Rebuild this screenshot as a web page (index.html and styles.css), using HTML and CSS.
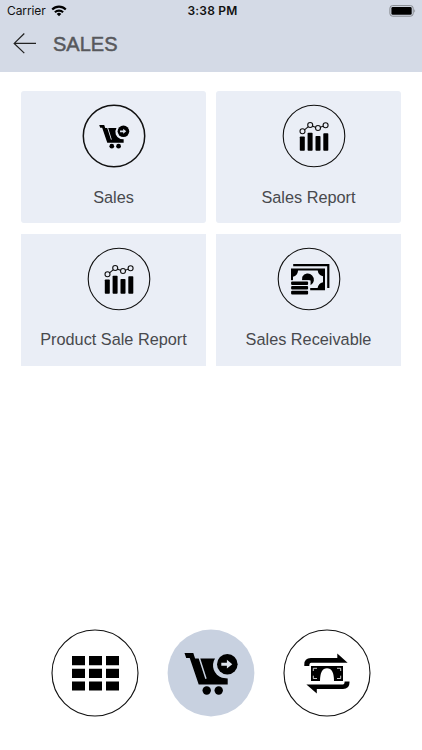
FILE: index.html
```html
<!DOCTYPE html>
<html lang="en">
<head>
<meta charset="utf-8">
<title>Sales</title>
<link rel="stylesheet" href="styles.css">
</head>
<body>
<svg class="defs" aria-hidden="true">
  <defs>
    <g id="cart">
      <path d="M24.5 30h8.8l1.8 5.5h3.6l6.6 20.6 1.4-.5-6.4-20.1h14.7a13 13 0 0 0 7 19.3l5.7.7v6H38.7L29.7 35h-3.5z"/>
      <circle cx="46.7" cy="67.5" r="4.2"/><circle cx="58.7" cy="67.5" r="4.2"/>
      <circle cx="67.3" cy="41.2" r="10.3"/>
      <path class="knock" d="M61.3 39.7h5.6v-2.9l5.4 4.4-5.4 4.4v-2.9h-5.6z"/>
    </g>
    <g id="chart">
      <g class="line"><path d="M20.7 27.4 28.2 21.2 35.8 24.2 43.5 21.2"/><g class="hollow"><circle cx="20.5" cy="27.2" r="2.5"/><circle cx="28.2" cy="21" r="2.5"/><circle cx="36" cy="24" r="2.5"/><circle cx="43.6" cy="21.2" r="2.5"/></g></g>
      <rect x="17.8" y="32.5" width="5" height="14.2" rx=".8"/><rect x="25.6" y="28.8" width="5" height="17.9" rx=".8"/><rect x="33.5" y="32" width="5" height="14.7" rx=".8"/><rect x="41.3" y="29.2" width="5" height="17.5" rx=".8"/>
    </g>
  </defs>
</svg>
<header class="header">
  <div class="status">
    <div class="carrier">Carrier
      <svg class="wifi" width="16" height="12" viewBox="0 0 16 12"><g fill="none" stroke="#000" stroke-width="2.1"><path d="M1.2 4.4a9.6 9.6 0 0 1 13.6 0"/><path d="M3.9 7.3a5.8 5.8 0 0 1 8.2 0"/></g><path d="M5.7 8.9a3.3 3.3 0 0 1 4.6 0L8 11.2z"/></svg>
    </div>
    <div class="time">3:38 PM</div>
    <svg class="battery" width="28" height="12" viewBox="0 0 28 12"><rect x=".9" y=".6" width="23.3" height="10.6" rx="2.7" fill="none" stroke="#85898f"/><rect x="2.4" y="2.1" width="20.3" height="7.6" rx="1.3"/><path d="M25.3 4q1.8 1.9 0 3.8z" fill="#85898f"/></svg>
  </div>
  <div class="titlebar">
    <svg class="back" width="24" height="22" viewBox="0 0 24 22"><path d="M23 10.4H1M11.3 .5 1.2 10.4l10.1 9.7" fill="none" stroke="#222" stroke-width="1.25"/></svg>
    <h1>SALES</h1>
  </div>
</header>
<main class="grid">
  <section class="card rounded">
    <svg class="icon" width="64" height="64" viewBox="0 0 64 64"><circle class="ring bold" cx="32" cy="32" r="30.7"/><use href="#cart" transform="translate(3.4 4) scale(.565)"/></svg>
    <span>Sales</span>
  </section>
  <section class="card rounded">
    <svg class="icon shifted" width="64" height="64" viewBox="0 0 64 64"><circle class="ring" cx="32" cy="32" r="30.8"/><use href="#chart"/></svg>
    <span>Sales Report</span>
  </section>
  <section class="card">
    <svg class="icon shifted" width="64" height="64" viewBox="0 0 64 64"><circle class="ring" cx="32" cy="32" r="30.8"/><use href="#chart"/></svg>
    <span>Product Sale Report</span>
  </section>
  <section class="card">
    <svg class="icon" width="64" height="64" viewBox="0 0 64 64"><circle class="ring" cx="32" cy="32" r="30.8"/>
      <path d="M16.2 18.1H51.3V41" fill="none" stroke="#000" stroke-width="2.2"/>
      <path fill-rule="evenodd" d="M14 21.4H48V43.2H33.2V33.8H14zM21.1 23.5Q20.5 28.7 16 29.8V33.8H33.2V41H40.6Q41.3 36.5 46 35.2V29.2Q41.3 28 40.7 23.5z"/>
      <path d="M25.3 29.7A6.2 6.2 0 1 1 33.6 38.2V33.4H25z"/>
      <path class="page" d="M12.5 33.2H32.7V50H12.5z"/>
      <g><rect x="14.1" y="34.5" width="17" height="3.5" rx="1"/><rect x="14.1" y="39.1" width="17" height="3.5" rx="1"/><rect x="14.1" y="43.7" width="17" height="3.7" rx="1"/></g>
    </svg>
    <span>Sales Receivable</span>
  </section>
</main>
<nav class="tabs">
  <svg width="88" height="88" viewBox="6 6 88 88"><circle class="ring" cx="50" cy="50" r="43"/><path d="M27 33h13v9.2H27zM44 33h13v9.2H44zM61 33h13v9.2H61zM27 45.8h13V55H27zM44 45.8h13V55H44zM61 45.8h13V55H61zM27 58.4h13v9.2H27zM44 58.4h13v9.2H44zM61 58.4h13v9.2H61z"/></svg>
  <svg class="active" width="88" height="88" viewBox="7 6 88 88"><circle cx="51" cy="50" r="43.4" fill="#c8d1e0"/><use href="#cart"/></svg>
  <svg width="88" height="88" viewBox="6 6 88 88"><circle class="ring" cx="50" cy="50" r="43"/>
    <path d="M27.3 43V41.5Q27.3 35 33.8 35H60.3V30.5L70.6 39.8H34.2Q32.3 39.8 32.3 43z"/>
    <path d="M72.5 58.5V59.5Q72.5 66 66 66H39.8V70.5L29.4 61.5H65.8Q67.6 61.5 67.6 58.5z"/>
    <path d="M34 43H66V58H57Q57 45.2 50 45.2T43 58H34z"/>
    <path d="M36.3 48V45.3H40M36.3 52.7V55.5H40M60 45.3H63.7V48M63.7 52.7V55.5H60" fill="none" stroke="#fff" stroke-width=".8"/>
  </svg>
</nav>
</body>
</html>
```
FILE: styles.css
```css
* { box-sizing: border-box; }
body {
  margin: 0;
  height: 750px;
  display: flex;
  flex-direction: column;
  background: #fff;
  font-family: "Liberation Sans", Arial, sans-serif;
  overflow: hidden;
}
svg { display: block; flex: none; }
.defs { width: 0; height: 0; position: absolute; }
.header { height: 71.5px; background: #d4dae6; }
.status {
  height: 22px;
  display: grid;
  grid-template-columns: 1fr auto 1fr;
  align-items: center;
  padding: 0 5px 0 7px;
  font: 12px/22px Inter, sans-serif;
  color: #111;
}
.carrier { display: flex; gap: 5px; align-items: center; letter-spacing: -.1px; }
.time { font-weight: 600; letter-spacing: .2px; padding-left: 1px; }
.battery { justify-self: end; }
.titlebar { height: 43px; display: flex; align-items: center; padding-left: 13px; gap: 16px; }
h1 {
  margin: 1px 0 0;
  font-size: 20px;
  font-weight: 400;
  color: #57585c;
  -webkit-text-stroke: .5px #57585c;
}
.grid {
  display: grid;
  grid-template-columns: 185px 185px;
  grid-template-rows: 132px 132px;
  gap: 10.5px 10px;
  padding: 19.5px 0 0 21px;
}
.card {
  display: flex;
  flex-direction: column;
  align-items: center;
  padding-top: 13px;
  background: #eaeef6;
  color: #48494d;
  font-size: 16.3px;
  line-height: 20px;
}
.rounded { border-radius: 3px; }
.card span { margin-top: 18.5px; white-space: nowrap; }
.shifted { margin-left: 10px; }
.ring { fill: none; stroke: #111; stroke-width: 1.1; }
.bold { stroke-width: 1.5; }
.line { fill: none; stroke: #111; stroke-width: 1.1; }
.hollow, .page { fill: #eaeef6; }
.knock { fill: #dce2ec; }
.tabs {
  margin-top: auto;
  height: 121px;
  display: flex;
  gap: 28px;
  padding-left: 51px;
}
```
